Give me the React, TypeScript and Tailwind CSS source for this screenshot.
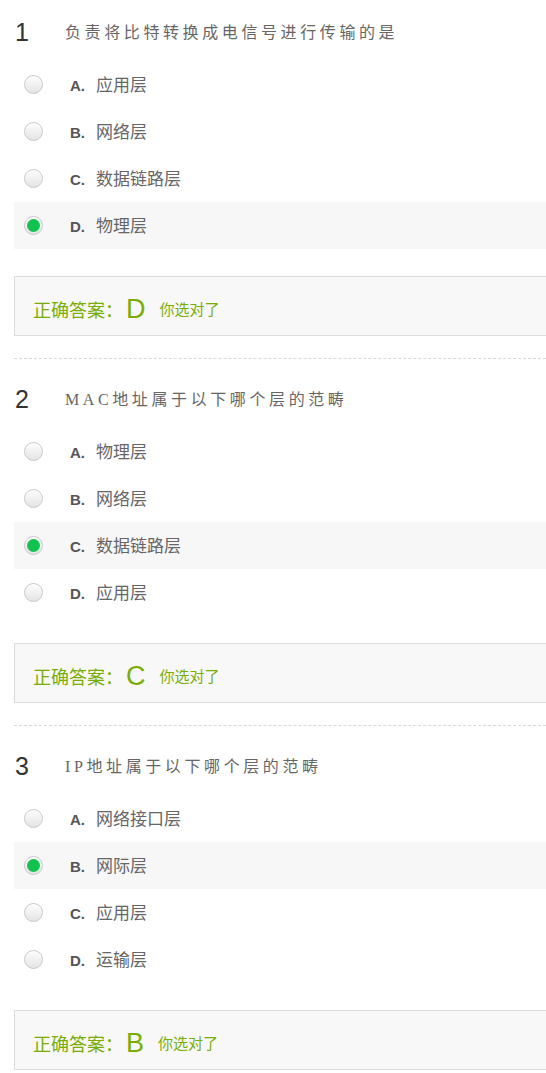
import React from 'react';

type Question = {
  no: number;
  title: string;
  options: string[];
  picked: number;
  answer: string;
};

const questions: Question[] = [
  {
    no: 1,
    title: '负责将比特转换成电信号进行传输的是',
    options: ['应用层', '网络层', '数据链路层', '物理层'],
    picked: 3,
    answer: 'D',
  },
  {
    no: 2,
    title: 'MAC地址属于以下哪个层的范畴',
    options: ['物理层', '网络层', '数据链路层', '应用层'],
    picked: 2,
    answer: 'C',
  },
  {
    no: 3,
    title: 'IP地址属于以下哪个层的范畴',
    options: ['网络接口层', '网际层', '应用层', '运输层'],
    picked: 1,
    answer: 'B',
  },
];

const letters = ['A', 'B', 'C', 'D'];

function Radio({ checked }: { checked: boolean }) {
  return (
    <span className="flex h-[19px] w-[19px] shrink-0 items-center justify-center rounded-full border border-[#c9c9c9] bg-gradient-to-b from-[#fdfdfd] to-[#e4e4e4] shadow-[inset_0_1px_1px_rgba(255,255,255,0.9)]">
      {checked && <span className="h-[13px] w-[13px] rounded-full bg-[#12c24f]" />}
    </span>
  );
}

function QuestionBlock({ q, last }: { q: Question; last: boolean }) {
  return (
    <div className={last ? '' : 'mb-[18px] border-b border-dashed border-[#d9d9d9] pb-[22px]'}>
      <div className="flex h-[46px] items-center">
        <span className="w-[51px] pl-[1px] font-['Liberation_Sans'] text-[25px] text-[#333]">{q.no}</span>
        <span className="font-['Liberation_Serif','Noto_Sans_CJK_SC',serif] text-[16px] tracking-[3.6px] text-[#666]">
          {q.title}
        </span>
      </div>

      <div className="mt-[5px] flex flex-col">
        {q.options.map((opt, i) => (
          <div
            key={i}
            className={`flex h-[47px] items-center pl-[10px] ${i === q.picked ? 'bg-[#f7f7f7]' : ''}`}
          >
            <Radio checked={i === q.picked} />
            <div className="ml-[27px] flex items-baseline">
              <span className="w-[26px] font-['Liberation_Sans'] text-[15px] font-bold text-[#555]">
                {letters[i]}.
              </span>
              <span className="font-['Noto_Sans_CJK_SC',sans-serif] text-[17px] text-[#666]">{opt}</span>
            </div>
          </div>
        ))}
      </div>

      <div className="mt-[27px] flex h-[60px] items-center border border-r-0 border-[#dcdcdc] bg-[#f8f8f8] pl-[18px] pt-[6px] font-['Noto_Sans_CJK_SC',sans-serif] text-[#79ad05]">
        <span className="text-[18px]">正确答案：</span>
        <span className="ml-[3px] font-['Liberation_Sans'] text-[27px] leading-none">{q.answer}</span>
        <span className="ml-[14px] text-[15px]">你选对了</span>
      </div>
    </div>
  );
}

export default function App() {
  return (
    <div className="min-h-[1073px] w-full overflow-hidden bg-white pl-[14px] pt-[10px]">
      {questions.map((q, i) => (
        <QuestionBlock key={q.no} q={q} last={i === questions.length - 1} />
      ))}
    </div>
  );
}
